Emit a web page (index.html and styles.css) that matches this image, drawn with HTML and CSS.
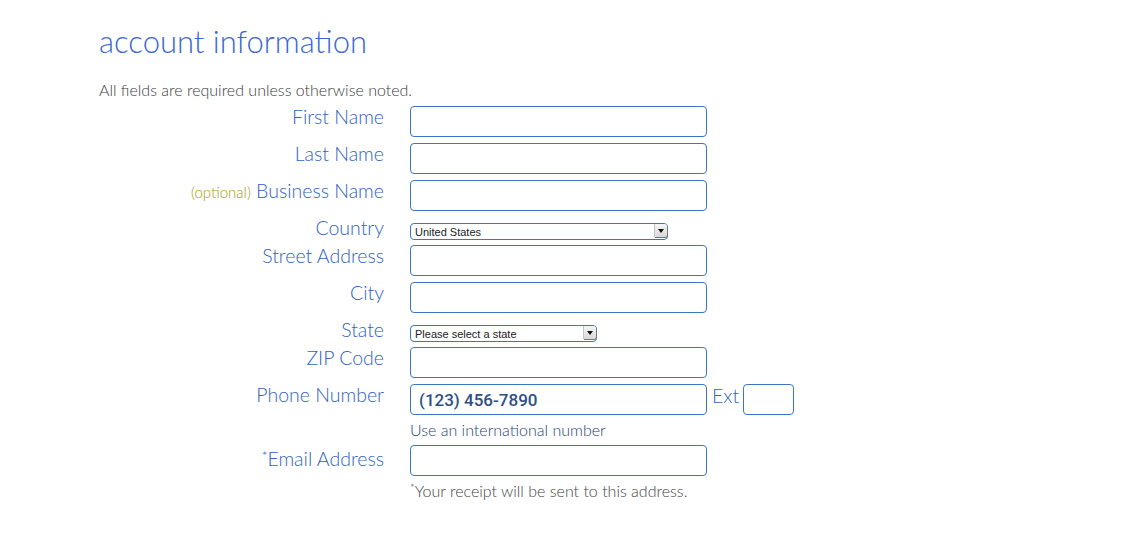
FILE: index.html
```html
<!DOCTYPE html>
<html lang="en">
<head>
  <meta charset="UTF-8">
  <title>Account Information</title>
  <link rel="stylesheet" href="styles.css">
</head>
<body>

  <div class="pagina">
    <h1>account information</h1>
    <p class="nota">All fields are required unless otherwise noted.</p>

    <!-- Formulario de cuenta -->
    <form class="formulario">
      <label class="etiqueta">First Name</label>
      <div class="campo"><input type="text" class="caja"></div>

      <label class="etiqueta">Last Name</label>
      <div class="campo"><input type="text" class="caja"></div>

      <label class="etiqueta"><span class="opcional">(optional)</span> Business Name</label>
      <div class="campo"><input type="text" class="caja"></div>

      <label class="etiqueta fila-corta">Country</label>
      <div class="campo fila-corta">
        <span class="selector pais">
          <select><option>United States</option></select>
          <span class="flecha"></span>
        </span>
      </div>

      <label class="etiqueta">Street Address</label>
      <div class="campo"><input type="text" class="caja"></div>

      <label class="etiqueta">City</label>
      <div class="campo"><input type="text" class="caja"></div>

      <label class="etiqueta fila-corta">State</label>
      <div class="campo fila-corta">
        <span class="selector estado">
          <select><option>Please select a state</option></select>
          <span class="flecha"></span>
        </span>
      </div>

      <label class="etiqueta">ZIP Code</label>
      <div class="campo"><input type="text" class="caja"></div>

      <label class="etiqueta">Phone Number</label>
      <div class="campo">
        <div class="telefono">
          <input type="text" class="caja tel" value="(123) 456-7890">
          <span class="ext">Ext</span>
          <input type="text" class="caja mini">
        </div>
        <div class="ayuda">Use an international number</div>
      </div>

      <label class="etiqueta"><span class="asterisco">*</span>Email Address</label>
      <div class="campo">
        <input type="text" class="caja">
        <div class="ayuda gris"><span class="asterisco">*</span>Your receipt will be sent to this address.</div>
      </div>
    </form>
  </div>

</body>
</html>
```

FILE: styles.css
```css
body {
  margin: 0;
  background-color: #fff;
  font-family: Lato, "Open Sans", sans-serif;
}
.pagina {
  padding: 22px 0 0 99px;
}
h1 {
  margin: 0;
  font-size: 31px;
  font-weight: 300;
  color: #3a67d4;
  line-height: 38px;
}
.nota {
  margin: 20px 0 0 0;
  font-size: 16px;
  font-weight: 300;
  color: #3c3c3c;
  line-height: 20px;
}

/* Formulario */
.formulario {
  display: grid;
  grid-template-columns: 285px auto;
  column-gap: 26px;
  row-gap: 6px;
  margin-top: 6px;
}
.etiqueta {
  text-align: right;
  font-size: 19.5px;
  font-weight: 300;
  color: #2f63c2;
  line-height: 22px;
}
.opcional {
  font-size: 15px;
  color: #a89612;
}
.asterisco {
  font-size: 0.7em;
  vertical-align: 5px;
}
.campo {
  display: flex;
  flex-direction: column;
  align-items: flex-start;
}
.caja {
  box-sizing: border-box;
  width: 297px;
  height: 31px;
  border: 1px solid #3b76c6;
  border-radius: 4px;
  padding: 0 8px;
  font-family: Arial, "Liberation Sans", sans-serif;
  font-size: 16px;
  outline: none;
}
.telefono {
  display: flex;
  align-items: flex-start;
}
.caja.tel {
  font-family: Roboto, Arial, sans-serif;
  font-size: 17px;
  font-weight: 500;
  color: #2e4f86;
}
.ext {
  font-size: 19.5px;
  font-weight: 300;
  color: #2f63c2;
  margin: 0 4px 0 5px;
  line-height: 24px;
}
.caja.mini {
  width: 51px;
}
.ayuda {
  font-size: 16px;
  font-weight: 300;
  color: #1f3f78;
  margin-top: 6px;
  line-height: 18px;
}
.ayuda.gris {
  color: #444;
  margin-top: 3px;
}

/* Selects */
.fila-corta {
  box-sizing: border-box;
  height: 22px;
}
.campo.fila-corta {
  padding-top: 6px;
}
.selector {
  position: relative;
  display: block;
  height: 17px;
}
.selector.pais {
  width: 258px;
}
.selector.estado {
  width: 187px;
}
.selector select {
  -webkit-appearance: none;
  appearance: none;
  box-sizing: border-box;
  display: block;
  width: 100%;
  height: 17px;
  border: 1px solid #3b76c6;
  border-radius: 4px;
  background: #fff;
  padding: 0 0 0 4px;
  font-family: Arial, "Liberation Sans", sans-serif;
  font-size: 11px;
  color: #222;
}
.flecha {
  position: absolute;
  right: 1px;
  top: 1px;
  width: 12px;
  height: 13px;
  background: linear-gradient(#f6f6f6, #d8d8d8);
  border-left: 1px solid #c4c4c4;
  border-radius: 0 3px 3px 0;
  box-shadow: 1px 1px 0 #777;
}
.flecha::after {
  content: "";
  position: absolute;
  left: 3px;
  top: 5px;
  border-left: 3px solid transparent;
  border-right: 3px solid transparent;
  border-top: 4px solid #111;
}
```
